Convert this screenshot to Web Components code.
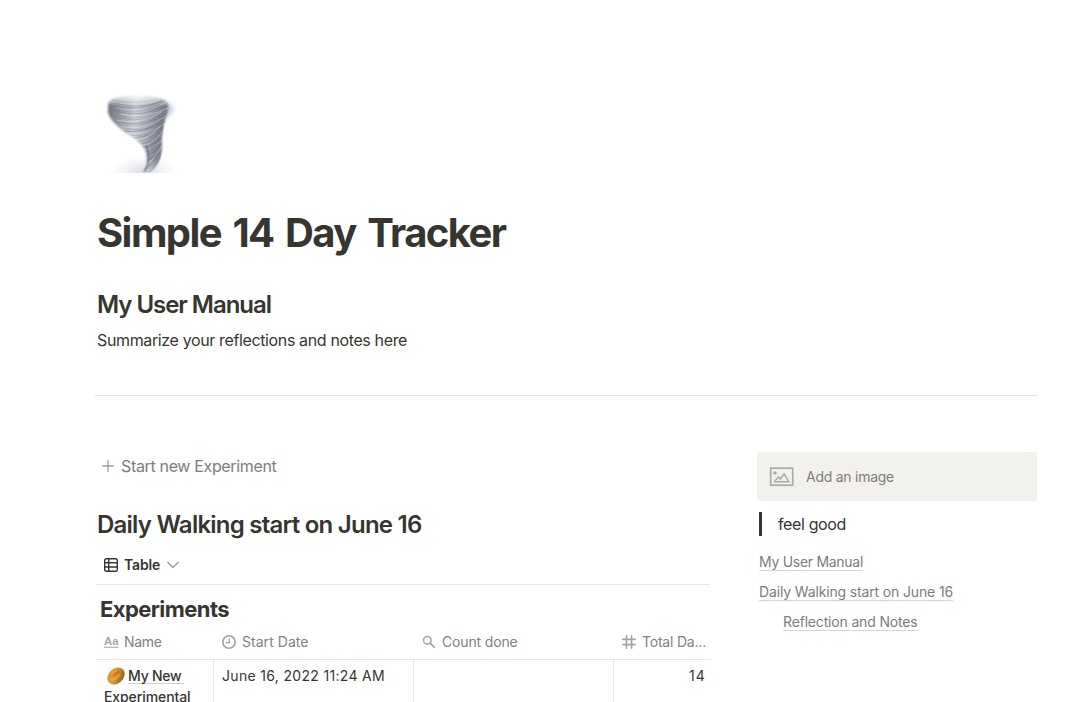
<!DOCTYPE html>
<html lang="en">
<head>
<meta charset="utf-8">
<title>Simple 14 Day Tracker</title>
<style>
html,body{margin:0;height:100%;overflow:hidden;background:#fff}
body{font-family:Inter,"Liberation Sans",sans-serif;color:#37352f}
</style>
</head>
<body>
<tracker-page></tracker-page>
<script>
const define = (name, html, init) => customElements.define(name, class extends HTMLElement {
  connectedCallback() {
    if (this.shadowRoot) return;
    const t = document.createElement('template');
    t.innerHTML = html;
    this.attachShadow({mode: 'open'}).append(t.content.cloneNode(true));
    if (init) init.call(this);
  }
});

// A single line of text whose tracking is adjusted to fill the given width.
define('text-run', `<style>:host{display:inline-block;white-space:pre;vertical-align:top}span{display:inline-block}</style><span><slot></slot></span>`, function () {
  const span = this.shadowRoot.querySelector('span');
  const n = this.textContent.length;
  const target = parseFloat(this.getAttribute('w'));
  const gap = (target - span.getBoundingClientRect().width) / n;
  span.style.letterSpacing = gap.toFixed(3) + 'px';
});

define('page-icon', `<style>:host{display:block;width:78px;height:78px}svg{display:block}</style>
<svg width="78" height="78" viewBox="0 0 78 78">
<defs>
<linearGradient id="g" x1="0" x2="1" y1="0" y2=".15"><stop offset="0" stop-color="#6c6f7a"/><stop offset=".2" stop-color="#8f929d"/><stop offset=".48" stop-color="#cdcfd7"/><stop offset=".62" stop-color="#b5b7c1"/><stop offset=".85" stop-color="#868a95"/><stop offset="1" stop-color="#747884"/></linearGradient>
<linearGradient id="t" x1="0" x2="0" y1="0" y2="1"><stop offset="0" stop-color="#fff" stop-opacity=".85"/><stop offset=".14" stop-color="#fff" stop-opacity="0"/><stop offset=".8" stop-color="#fff" stop-opacity="0"/><stop offset="1" stop-color="#eef" stop-opacity=".5"/></linearGradient>
<radialGradient id="d"><stop offset="0" stop-color="#c5cae0" stop-opacity=".7"/><stop offset="1" stop-color="#e4e7f2" stop-opacity="0"/></radialGradient>
<filter id="b" x="-20%" y="-20%" width="140%" height="140%"><feGaussianBlur stdDeviation=".9"/></filter>
<filter id="s" x="-20%" y="-20%" width="140%" height="140%"><feGaussianBlur stdDeviation=".55"/></filter>
<filter id="c" x="-40%" y="-40%" width="180%" height="180%"><feGaussianBlur stdDeviation="2.2"/></filter>
<clipPath id="k"><path d="M7 10Q7 4 20 2Q46-1 61 4Q69 8 67 14C65 25 60 35 61 50Q61 68 49 77L41 77Q48 68 45 58C41 42 14 37 7 18Z"/></clipPath>
</defs>
<ellipse cx="43" cy="77" rx="36" ry="17" fill="url(#d)"/>
<path d="M60 5Q76 10 71 18L64 24" fill="#b4b8cf" opacity=".7" filter="url(#c)"/>
<g filter="url(#b)">
<path d="M7 10Q7 4 20 2Q46-1 61 4Q69 8 67 14C65 25 60 35 61 50Q61 68 49 77L41 77Q48 68 45 58C41 42 14 37 7 18Z" fill="url(#g)"/>
<path d="M7 10Q7 4 20 2Q46-1 61 4Q69 8 67 14C65 25 60 35 61 50Q61 68 49 77L41 77Q48 68 45 58C41 42 14 37 7 18Z" fill="url(#t)"/>
</g>
<g clip-path="url(#k)" filter="url(#s)">
<g id="bands" fill="none"></g>
<path d="M45 50Q51 65 43 77M61 31Q62 42 62 51Q61 62 52 75" stroke="#5e626f" stroke-width="2" fill="none" opacity=".4"/>
</g>
</svg>`, function () {
  // thin swirling bands, steeper towards the foot of the funnel
  let out = '';
  for (let i = 0; i < 36; i++) {
    const y = 4 + i * 2, tilt = 3 + i * .42, sag = 8 - i * .12;
    const start = 5 + i * 1.05 + (i * 7 % 5) * 1.8, end = 69 - (i * 11 % 7) * 1.6;
    const light = i % 3 === 1;
    out += `<path d="M${start} ${y + i * .12}Q${(start + end) / 2} ${y + sag} ${end} ${y - tilt}" stroke="${light ? '#eff0f6' : '#656976'}" stroke-width="${.6 + (i % 4) * .13}" opacity="${light ? .45 : .25 + (i * 5 % 4) * .05}"/>`;
  }
  this.shadowRoot.querySelector('#bands').innerHTML = out;
});

define('section-title', `<style>:host{display:block;font-weight:600;font-size:24px;line-height:31px;height:31px}</style><slot></slot>`);

define('new-button', `<style>:host{display:flex;align-items:center;height:24px;gap:7px;padding-left:7px;font-size:16px;line-height:24px;color:#7e7d79}svg{display:block}</style>
<svg width="12" height="12" viewBox="0 0 12 12"><path d="M6 0V12M0 6H12" stroke="#a2a19d" stroke-width="1.3"/></svg><slot></slot>`);

define('view-tab', `<style>:host{display:flex;align-items:center;height:39px;padding:0 0 1px 8px;font-size:14px;font-weight:600;line-height:20px;border-bottom:1px solid #e7e7e6;box-sizing:border-box}
.t{margin:0 0 0 6px}.c{margin:1px 0 0 7px}svg{display:block}</style>
<svg width="14" height="14" viewBox="0 0 14 14" fill="none" stroke="#37352f" stroke-width="1.4"><rect x=".7" y=".7" width="12.6" height="12.6" rx="1.6"/><path d="M.7 4.7H13.3M.7 9H13.3M4.7 .7V13.3"/></svg>
<span class="t"><slot></slot></span>
<svg class="c" width="12" height="8" viewBox="0 0 12 8" fill="none" stroke="#9b9a97" stroke-width="1.4"><path d="M.5 1L6 6.6L11.5 1"/></svg>`);

const icons = {
  title: '<svg width="15" height="14" viewBox="0 0 15 14"><text x="0" y="9.7" font-family="Liberation Sans,sans-serif" font-size="11" font-weight="700" textLength="14.5" lengthAdjust="spacingAndGlyphs" fill="#a8a7a4">Aa</text><path d="M0 12.3H14.5" stroke="#b3b2af" stroke-width="1.2"/></svg>',
  date: '<svg width="14" height="14" viewBox="0 0 14 14" fill="none" stroke="#a3a29f"><circle cx="7" cy="7" r="6.2" stroke-width="1.6"/><path d="M7.3 3.2V7.6H3.7" stroke-width="1.4"/></svg>',
  search: '<svg width="14" height="14" viewBox="0 0 14 14" fill="none" stroke="#a3a29f"><circle cx="5.3" cy="5.2" r="3.8" stroke-width="1.5"/><path d="M8.2 8.1L12.7 12.6" stroke-width="1.8"/></svg>',
  number: '<svg width="14" height="14" viewBox="0 0 14 14" fill="none" stroke="#a3a29f" stroke-width="1.6" stroke-linecap="round"><path d="M4.5 .8V13.2M9.6 .8V13.2M.8 4.4H13.2M.8 9.6H13.2"/></svg>'
};
define('table-head', `<style>:host{display:flex;align-items:center;height:34px;padding-left:8px;padding-bottom:1px;box-sizing:border-box;font-size:14px;line-height:20px;color:#82817d;gap:6px;border-bottom:1px solid #e6e6e5}svg{display:block}.icon{display:block;width:14px;height:14px}</style><span class="icon"></span><slot></slot>`, function () {
  this.shadowRoot.querySelector('.icon').innerHTML = icons[this.getAttribute('icon')];
});
define('table-cell', `<style>:host{display:block;height:80px;box-sizing:border-box;padding:5px 8px;font-size:14px;line-height:21px;border-right:1px solid #e9e9e8}:host([last]){border-right:0;text-align:right;padding-right:5px}</style><slot></slot>`);

define('ball-icon', `<style>:host{display:inline-block;width:20px;height:18px;padding-top:1px;box-sizing:border-box;margin-left:2px;vertical-align:top}svg{display:block}</style>
<svg width="20" height="20" viewBox="0 0 20 20"><defs><linearGradient id="o" x1="0" y1="0" x2=".7" y2="1"><stop offset="0" stop-color="#d99a3c"/><stop offset=".5" stop-color="#dc9a35"/><stop offset="1" stop-color="#9a5c14"/></linearGradient></defs><ellipse cx="10" cy="10" rx="9.6" ry="7.4" transform="rotate(-42 10 10)" fill="url(#o)"/><path d="M5 14Q10 13.5 14 8.5" fill="none" stroke="#f0b957" stroke-width="2" opacity=".55"/><path d="M7.3 10L13 5" stroke="#8c5a20" stroke-width="1.3" stroke-dasharray="1.4 .5" opacity=".8"/></svg>`);

define('experiment-table', `<style>:host{display:grid;grid-template-columns:118px 200px 200px 97px;width:615px}.link{display:inline-block;height:18px;border-bottom:1px solid #d4d3d1;padding-right:3px;vertical-align:top;margin-left:2px}table-cell.n{font-weight:500;white-space:nowrap}</style>
<table-head icon="title"><text-run w="37.5">Name</text-run></table-head>
<table-head icon="date"><text-run w="66.5">Start Date</text-run></table-head>
<table-head icon="search"><text-run w="75.5">Count done</text-run></table-head>
<table-head icon="number"><text-run w="64">Total Da...</text-run></table-head>
<table-cell class="n"><ball-icon></ball-icon><span class="link"><text-run w="53.5">My New</text-run></span><br><text-run w="86.5">Experimental</text-run></table-cell>
<table-cell><text-run w="163">June 16, 2022 11:24 AM</text-run></table-cell>
<table-cell></table-cell>
<table-cell last><text-run w="17">14</text-run></table-cell>`);

define('image-placeholder', `<style>:host{display:flex;align-items:center;height:49px;background:#f2f1ee;border-radius:3px;padding:1px 0 0 12px;gap:12px;font-size:14px;line-height:20px;color:#7f7e7a;box-sizing:border-box}svg{display:block}</style>
<svg width="25" height="20" viewBox="0 0 25 20" fill="none" stroke="#acaba8"><rect x="1.7" y="1.2" width="22" height="17" stroke-width="1.7"/><circle cx="6" cy="6" r="1.7" fill="#acaba8" stroke="none"/><path d="M5.4 14.8L9.5 9.8L11.3 12L15.3 6.8L19.8 14.8Z" stroke-width="1.5" stroke-linejoin="round"/></svg><slot></slot>`);
define('quote-block', `<style>:host{display:block;border-left:3px solid #37352f;padding-left:16px;height:24px;line-height:24px;font-size:16px;margin:11px 0 0 2px}</style><slot></slot>`);
define('toc-link', `<style>:host{display:flex;height:30px;padding-left:2px;font-size:14px;line-height:20px;color:#7d7c78}:host([sub]){padding-left:26px}span{height:18px;border-bottom:1px solid #d7d6d4}</style><span><slot></slot></span>`);

define('tracker-page', `<style>
:host{display:block;height:702px;overflow:hidden;padding:95px 43px 0 95px;box-sizing:border-box}
page-icon{margin-left:6px}
h1{margin:36px 0 0 2px;font-size:40px;line-height:48px;font-weight:700;word-spacing:3.5px}
.in{margin-left:2px}
.manual{margin-top:32px}
.p{margin-top:8px;font-size:16px;line-height:24px;height:24px}
hr{border:0;height:1px;background:#dfdfde;margin:43px 0 0;width:942px}
.cols{display:grid;grid-template-columns:616px 280px;column-gap:46px;margin-top:56px}
new-button{margin-top:2px}
.daily{margin-top:31px}
view-tab{margin:6px 0 0 1px;width:614px}
.exp{margin:11px 0 0 5px;height:26px;line-height:26px;font-size:22px;font-weight:650}
experiment-table{margin:4px 0 0 1px}
.toc{margin-top:16px}
</style>
<page-icon></page-icon>
<h1><text-run w="408.5">Simple 14 Day Tracker</text-run></h1>
<section-title class="in manual"><text-run w="174">My User Manual</text-run></section-title>
<div class="in p"><text-run w="310">Summarize your reflections and notes here</text-run></div>
<hr>
<div class="cols">
<main>
<new-button><text-run w="155.5">Start new Experiment</text-run></new-button>
<section-title class="in daily"><text-run w="324.5">Daily Walking start on June 16</text-run></section-title>
<view-tab><text-run w="36">Table</text-run></view-tab>
<section-title class="exp"><text-run w="129">Experiments</text-run></section-title>
<experiment-table></experiment-table>
</main>
<aside>
<image-placeholder><text-run w="88">Add an image</text-run></image-placeholder>
<quote-block><text-run w="68">feel good</text-run></quote-block>
<div class="toc">
<toc-link><text-run w="104">My User Manual</text-run></toc-link>
<toc-link><text-run w="194">Daily Walking start on June 16</text-run></toc-link>
<toc-link sub><text-run w="134.5">Reflection and Notes</text-run></toc-link>
</div>
</aside>
</div>`);
</script>
</body>
</html>
